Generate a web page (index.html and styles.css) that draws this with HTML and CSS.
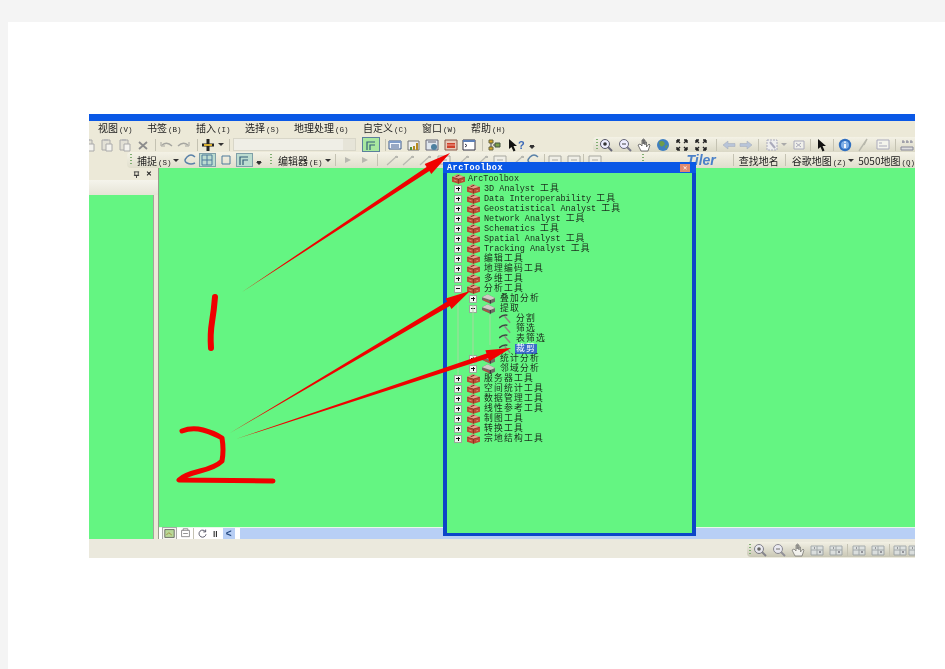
FILE: index.html
```html
<!DOCTYPE html>
<html lang="zh-CN">

<head>
  <meta charset="UTF-8">
  <meta name="viewport" content="width=device-width, initial-scale=1.0">
  <title>ArcToolbox</title>
  <link rel="stylesheet" href="styles.css">
</head>

<body>
  <!-- shared icons -->
  <svg class="defs">
    <symbol id="box" viewBox="0 0 14 10"><path d="M0 3 6 0l8 3v5l-7 2-7-2z" fill="#bc4a32"/><path d="M0 3l7 2 7-2-8-3z" fill="#e8a088"/><path d="M7 5v5M0 3l7 2 7-2" stroke="#7c2c1c" fill="none" stroke-width=".8"/><path d="M4 2.400 8 1" stroke="#5c2015" stroke-width="1"/><path d="M2 6l3 1M10 7l2-.6" stroke="#e8a088" stroke-width=".8"/></symbol>
    <symbol id="set" viewBox="0 0 14 10"><path d="M0 3l6-3 8 4v4l-5 2-9-4z" fill="#6f6b64"/><path d="M0 3l9 3 5-2-8-4z" fill="#cfcbc4"/><path d="M9 6v4" stroke="#333"/><path d="M2 6l6 2.500" stroke="#b5503a" stroke-width="1.400"/></symbol>
    <symbol id="ham" viewBox="0 0 14 10"><path d="M0 4Q4 0 9 1" stroke="#444" stroke-width="1.600" fill="none"/><path d="M6 2l6 7" stroke="#8a8a80" stroke-width="1.500"/></symbol>
    <symbol id="pin" viewBox="0 0 8 8"><path d="M1 1h6M2 1v4h4V1M1 5h6M4 5v3" stroke="#333" fill="none"/></symbol>
    <symbol id="paste" viewBox="0 0 14 14"><path d="M2 2h8v10H2z" fill="#e3e1d6" stroke="#aaa"/><path d="M4 1h4v2H4z" fill="#bbb"/><path d="M6 6h6v7H6z" fill="#f4f3ee" stroke="#aaa"/></symbol>
    <symbol id="del" viewBox="0 0 14 14"><path d="M3 4l8 7M11 4l-8 7" stroke="#8d8d8d" stroke-width="1.800"/></symbol>
    <symbol id="undo" viewBox="0 0 14 14"><path d="M2 7Q7 3 12 8" stroke="#a5a5a0" stroke-width="1.400" fill="none"/><path d="M1 4v4h4" stroke="#a5a5a0" fill="none"/></symbol>
    <symbol id="redo" viewBox="0 0 14 14"><path d="M2 8Q7 3 12 7" stroke="#a5a5a0" stroke-width="1.400" fill="none"/><path d="M13 4v4H9" stroke="#a5a5a0" fill="none"/></symbol>
    <symbol id="plus" viewBox="0 0 14 14"><path d="M5.500 1h3v4.500H13v3H8.500V13h-3V8.500H1v-3h4.500z" fill="#222"/><path d="M3 6h8v2H3z" fill="#d8b030"/></symbol>
    <symbol id="table" viewBox="0 0 14 14"><path d="M1 3h12v8H1z" fill="#f2f6fb" stroke="#3c5a8c"/><path d="M1 3h12v2H1z" fill="#7f9cc8"/><path d="M3 7h8M3 9h8" stroke="#3c5a8c"/></symbol>
    <symbol id="chart" viewBox="0 0 14 14"><path d="M1 3h11v9H1z" fill="#eee" stroke="#777"/><path d="M6 12V8h2v4zM9 12V5h2v7z" fill="#b58a20"/><path d="M3 12v-3h2v3z" fill="#4f8f3a"/></symbol>
    <symbol id="layout" viewBox="0 0 14 14"><path d="M1 2h12v10H1z" fill="#dfe6ee" stroke="#667"/><circle cx="9" cy="9" r="3" fill="#4d7f9f"/><path d="M3 4h8" stroke="#667"/></symbol>
    <symbol id="tbox" viewBox="0 0 14 14"><path d="M1 2h12v10H1z" fill="#e8c8b8" stroke="#8a5a4a"/><path d="M3 5h8v5H3z" fill="#d0402a"/><path d="M3 7h8" stroke="#f0a090"/></symbol>
    <symbol id="term" viewBox="0 0 14 14"><path d="M1 2h12v10H1z" fill="#fff" stroke="#334"/><path d="M1 2h12v2H1z" fill="#5b7fb8"/><path d="M3 6l2 1.500L3 9" stroke="#334" fill="none"/></symbol>
    <symbol id="graph" viewBox="0 0 14 14"><path d="M2 2h4v3H2zM2 9h4v3H2z" fill="#d8a820" stroke="#664"/><path d="M8 5h5v4H8z" fill="#7fa04a" stroke="#454"/><path d="M4 5v4M6 7h2" stroke="#444"/></symbol>
    <symbol id="zin" viewBox="0 0 14 14"><circle cx="6" cy="6" r="4.500" fill="#eef" stroke="#556"/><circle cx="6" cy="6" r="1.800" fill="#333"/><path d="M9 9l4 4" stroke="#667" stroke-width="2"/></symbol>
    <symbol id="zout" viewBox="0 0 14 14"><circle cx="6" cy="6" r="4.500" fill="#eef" stroke="#667"/><path d="M4 6h4" stroke="#444"/><path d="M9 9l4 4" stroke="#778" stroke-width="2"/></symbol>
    <symbol id="hand" viewBox="0 0 14 14"><path d="M4 13 1 7l2-1 2 2V2h1v4-5h1v5-4h1v5-3h1.500v5L12 6l1 1-2 6z" fill="#fff" stroke="#555" stroke-width=".8"/></symbol>
    <symbol id="globe" viewBox="0 0 14 14"><circle cx="7" cy="7" r="6" fill="#3f7fc0"/><path d="M3 4q3-2 5 0t-1 4-4-4zM9 8l3-1-2 4z" fill="#6d9c4a"/></symbol>
    <symbol id="fixin" viewBox="0 0 14 14"><path d="M2 2l3 3M2 2h3M2 2v3M12 2 9 5M12 2H9M12 2v3M2 12l3-3M2 12h3M2 12V9M12 12 9 9M12 12H9M12 12V9" stroke="#222" stroke-width="1.400" fill="none"/></symbol>
    <symbol id="back" viewBox="0 0 14 14"><path d="M1 7l5-4v2.500h7v3H6V11z" fill="#b8c4d8" stroke="#a0a8b8" stroke-width=".5"/></symbol>
    <symbol id="fwd" viewBox="0 0 14 14"><path d="M13 7 8 3v2.500H1v3h7V11z" fill="#b8c4d8" stroke="#a0a8b8" stroke-width=".5"/></symbol>
    <symbol id="sel" viewBox="0 0 14 14"><path d="M2 2h10v10H2z" fill="#eee" stroke="#aab" stroke-dasharray="2 1"/><path d="M5 4l5 6" stroke="#aab" stroke-width="2"/></symbol>
    <symbol id="clr" viewBox="0 0 14 14"><path d="M2 3h10v8H2z" fill="#f0f0ea" stroke="#aab"/><path d="M4 5l5 4M9 5 4 9" stroke="#aab"/></symbol>
    <symbol id="ptr" viewBox="0 0 14 14"><path d="M3 1l8 7H7.500l2 4.500-2 1L5.500 9 3 11z" fill="#111"/></symbol>
    <symbol id="info" viewBox="0 0 14 14"><circle cx="7" cy="7" r="6.200" fill="#2f6fc0"/><circle cx="7" cy="7" r="4" fill="#7fb0e8"/><path d="M7 6v4M7 3.500v1.300" stroke="#fff" stroke-width="1.800"/></symbol>
    <symbol id="bolt" viewBox="0 0 14 14"><path d="M11 1 3 13M11 1 8 7" stroke="#b8b8ac" stroke-width="1.400" fill="none"/></symbol>
    <symbol id="card" viewBox="0 0 14 14"><path d="M1 2h12v9H1z" fill="#f4f4ec" stroke="#aab"/><path d="M3 5h3M3 8h8" stroke="#aab"/></symbol>
    <symbol id="meas" viewBox="0 0 14 14"><path d="M1 9h12v3H1z" fill="#ddd" stroke="#889"/><path d="M3 2v3M7 2v3M11 2v3M2 4h3M6 4h3M10 4h3" stroke="#889"/></symbol>
    <symbol id="circ" viewBox="0 0 14 14"><path d="M11 4Q7 0 3 4t0 6 8 0" fill="none" stroke="#5a82a8" stroke-width="1.500"/></symbol>
    <symbol id="grid" viewBox="0 0 14 14"><path d="M2 2h10v10H2zM7 2v10M2 7h10" fill="none" stroke="#4f7a9a"/></symbol>
    <symbol id="sq" viewBox="0 0 14 14"><path d="M3 3h8v8H3z" fill="none" stroke="#4f7a9a"/></symbol>
    <symbol id="corner" viewBox="0 0 14 14"><path d="M3 12V4h8M6 12V7h5" fill="none" stroke="#345f78" stroke-width="1.200"/></symbol>
    <symbol id="tri" viewBox="0 0 14 14"><path d="M4 4l6 3-6 3z" fill="#b8b8b0"/></symbol>
    <symbol id="edge" viewBox="0 0 14 14"><path d="M2 12 12 3" stroke="#b8b8b0" stroke-width="1.200"/><path d="M10 3h3v2h-3z" fill="#b8b8b0"/></symbol>
    <symbol id="rect" viewBox="0 0 14 14"><path d="M1 3h12v8H1z" fill="#efeee6" stroke="#a8a8a0"/><path d="M4 7h6" stroke="#a8a8a0"/></symbol>
    <symbol id="map" viewBox="0 0 14 14"><path d="M1 2h12v10H1z" fill="#b8d898" stroke="#555"/><path d="M3 9l3-3 4 3" stroke="#a08030" fill="none"/></symbol>
    <symbol id="lay" viewBox="0 0 14 14"><path d="M2 3h10v8H2z" fill="#fff" stroke="#777"/><path d="M4 3V1h6v2M4 7h6" stroke="#777" fill="none"/></symbol>
    <symbol id="ref" viewBox="0 0 14 14"><path d="M11 5A4.500 4.500 0 1 0 11.500 8M11 2v3H8" fill="none" stroke="#556" stroke-width="1.200"/></symbol>
    <symbol id="stat" viewBox="0 0 14 14"><path d="M1 3h12v9H1z" fill="#dde3e8" stroke="#8a949c"/><path d="M1 7h12M7 3v9" stroke="#8a949c"/><path d="M4 5h1M9 9h2" stroke="#556" stroke-width="1.500"/></symbol>
  </svg>

  <div class="sheet">
    <div class="shot">
      <div class="titlebar"></div>

      <div class="menubar">
        <span>视图<b>(V)</b></span>
        <span>书签<b>(B)</b></span>
        <span>插入<b>(I)</b></span>
        <span>选择<b>(S)</b></span>
        <span>地理处理<b>(G)</b></span>
        <span>自定义<b>(C)</b></span>
        <span>窗口<b>(W)</b></span>
        <span>帮助<b>(H)</b></span>
      </div>

      <div class="tb tb-std">
        <div class="grp gap4 back7">
          <svg class="ic"><use href="#paste"/></svg>
          <svg class="ic"><use href="#paste"/></svg>
          <svg class="ic"><use href="#paste"/></svg>
          <svg class="ic"><use href="#del"/></svg>
        </div>
        <i class="sep m5"></i>
        <div class="grp gap2 m4">
          <svg class="ic"><use href="#undo"/></svg>
          <svg class="ic"><use href="#redo"/></svg>
        </div>
        <i class="sep m7"></i>
        <svg class="ic m3"><use href="#plus"/></svg>
        <i class="caret m3"></i>
        <i class="sep m5"></i>
        <div class="combo m3"><i class="combo-btn"></i></div>
        <div class="hi hi-wide m6"><svg class="ic"><use href="#corner"/></svg></div>
        <i class="sep m5"></i>
        <div class="grp gap-data m2">
          <svg class="ic"><use href="#table"/></svg>
          <svg class="ic"><use href="#chart"/></svg>
          <svg class="ic"><use href="#layout"/></svg>
          <svg class="ic"><use href="#tbox"/></svg>
          <svg class="ic"><use href="#term"/></svg>
        </div>
        <i class="sep m6"></i>
        <svg class="ic m4"><use href="#graph"/></svg>
        <svg class="ic m5"><use href="#ptr"/></svg>
        <span class="help">?</span>
        <i class="caret bar m4"></i>

        <div class="grp tools">
          <i class="grip"></i>
          <div class="grp gap5 m1">
            <svg class="ic"><use href="#zin"/></svg>
            <svg class="ic"><use href="#zout"/></svg>
            <svg class="ic"><use href="#hand"/></svg>
            <svg class="ic"><use href="#globe"/></svg>
            <svg class="ic"><use href="#fixin"/></svg>
            <svg class="ic"><use href="#fixin"/></svg>
          </div>
          <i class="sep m8"></i>
          <div class="grp gap3 m5">
            <svg class="ic"><use href="#back"/></svg>
            <svg class="ic"><use href="#fwd"/></svg>
          </div>
          <i class="sep m5"></i>
          <svg class="ic m6"><use href="#sel"/></svg>
          <i class="caret faint m2"></i>
          <svg class="ic m5"><use href="#clr"/></svg>
          <i class="sep m4"></i>
          <svg class="ic m4"><use href="#ptr"/></svg>
          <i class="sep m4"></i>
          <svg class="ic m4"><use href="#info"/></svg>
          <svg class="ic m4"><use href="#bolt"/></svg>
          <svg class="ic m6"><use href="#card"/></svg>
          <i class="sep m5"></i>
          <svg class="ic m4"><use href="#meas"/></svg>
        </div>
      </div>

      <div class="tb tb-snap">
        <div class="grp snap">
          <i class="grip"></i>
          <span class="label m5">捕捉<b>(S)</b></span>
          <i class="caret m1"></i>
          <svg class="ic m5"><use href="#circ"/></svg>
          <div class="hi m1"><svg class="ic"><use href="#grid"/></svg></div>
          <svg class="ic m3"><use href="#sq"/></svg>
          <div class="hi m3"><svg class="ic"><use href="#corner"/></svg></div>
          <i class="caret bar m3"></i>
          <i class="grip m8"></i>
          <span class="label m6">编辑器<b>(E)</b></span>
          <i class="caret m3"></i>
          <i class="sep m4"></i>
          <svg class="ic m5"><use href="#tri"/></svg>
          <svg class="ic m3"><use href="#tri"/></svg>
          <i class="sep m5"></i>
          <svg class="ic m7"><use href="#edge"/></svg>
          <svg class="ic m2"><use href="#edge"/></svg>
          <svg class="ic m3"><use href="#edge"/></svg>
          <svg class="ic m5"><use href="#rect"/></svg>
          <svg class="ic m5"><use href="#edge"/></svg>
          <svg class="ic m5"><use href="#edge"/></svg>
          <svg class="ic m4"><use href="#rect"/></svg>
          <svg class="ic m4"><use href="#edge"/></svg>
          <svg class="ic m2"><use href="#circ"/></svg>
          <i class="sep m3"></i>
          <svg class="ic m3"><use href="#rect"/></svg>
          <svg class="ic m5"><use href="#rect"/></svg>
          <i class="sep m2"></i>
          <svg class="ic m4"><use href="#rect"/></svg>
          <i class="grip m40"></i>
          <span class="tiler">Tiler</span>
          <i class="sep m17"></i>
          <span class="label m5">查找地名</span>
          <i class="sep m6"></i>
          <span class="label m6">谷歌地图<b>(Z)</b></span>
          <i class="caret m2"></i>
          <span class="label m4">5050地图<b>(Q)</b></span>
        </div>
      </div>

      <div class="main">
        <div class="dock">
          <div class="dock-top"><svg class="dock-pin"><use href="#pin"/></svg><span class="dock-btn">✕</span></div>
          <div class="dock-head"></div>
          <div class="dock-body"></div>
        </div>
        <div class="view">
          <div class="map"></div>
          <div class="viewbar">
            <div class="viewtabs">
              <span class="tab-on"><svg class="ic-s"><use href="#map"/></svg></span>
              <svg class="ic-s m3"><use href="#lay"/></svg>
              <i class="sep m2"></i>
              <svg class="ic-s m3"><use href="#ref"/></svg>
              <span class="pause">II</span>
              <span class="collapse">&lt;</span>
            </div>
            <div class="hscroll"></div>
          </div>
        </div>
      </div>

      <div class="status">
        <div class="grp nav">
          <i class="grip"></i>
          <div class="grp gap5 m2">
            <svg class="ic"><use href="#zin"/></svg>
            <svg class="ic"><use href="#zout"/></svg>
            <svg class="ic"><use href="#hand"/></svg>
            <svg class="ic"><use href="#stat"/></svg>
            <svg class="ic"><use href="#stat"/></svg>
          </div>
          <i class="sep m4"></i>
          <svg class="ic m4"><use href="#stat"/></svg>
          <svg class="ic m5"><use href="#stat"/></svg>
          <i class="sep m4"></i>
          <svg class="ic m3"><use href="#stat"/></svg>
          <svg class="ic m1"><use href="#stat"/></svg>
        </div>
      </div>

      <!-- ArcToolbox window -->
      <div class="toolbox">
        <div class="tbx-title">ArcToolbox<span class="tbx-close">✕</span></div>
        <div class="tree">
          <div class="row root"><svg class="ico"><use href="#box"/></svg><span class="en">ArcToolbox</span></div>
          <div class="row"><i class="exp plus"></i><svg class="ico"><use href="#box"/></svg><span><span class="en">3D Analyst </span>工具</span></div>
          <div class="row"><i class="exp plus"></i><svg class="ico"><use href="#box"/></svg><span><span class="en">Data Interoperability </span>工具</span></div>
          <div class="row"><i class="exp plus"></i><svg class="ico"><use href="#box"/></svg><span><span class="en">Geostatistical Analyst </span>工具</span></div>
          <div class="row"><i class="exp plus"></i><svg class="ico"><use href="#box"/></svg><span><span class="en">Network Analyst </span>工具</span></div>
          <div class="row"><i class="exp plus"></i><svg class="ico"><use href="#box"/></svg><span><span class="en">Schematics </span>工具</span></div>
          <div class="row"><i class="exp plus"></i><svg class="ico"><use href="#box"/></svg><span><span class="en">Spatial Analyst </span>工具</span></div>
          <div class="row"><i class="exp plus"></i><svg class="ico"><use href="#box"/></svg><span><span class="en">Tracking Analyst </span>工具</span></div>
          <div class="row"><i class="exp plus"></i><svg class="ico"><use href="#box"/></svg><span>编辑工具</span></div>
          <div class="row"><i class="exp plus"></i><svg class="ico"><use href="#box"/></svg><span>地理编码工具</span></div>
          <div class="row"><i class="exp plus"></i><svg class="ico"><use href="#box"/></svg><span>多维工具</span></div>
          <div class="row"><i class="exp"></i><svg class="ico"><use href="#box"/></svg><span>分析工具</span></div>
          <div class="row sub"><i class="exp plus"></i><svg class="ico"><use href="#set"/></svg><span>叠加分析</span></div>
          <div class="row sub"><i class="exp"></i><svg class="ico"><use href="#set"/></svg><span>提取</span></div>
          <div class="row leaf"><svg class="ico"><use href="#ham"/></svg><span>分割</span></div>
          <div class="row leaf"><svg class="ico"><use href="#ham"/></svg><span>筛选</span></div>
          <div class="row leaf"><svg class="ico"><use href="#ham"/></svg><span>表筛选</span></div>
          <div class="row leaf"><svg class="ico"><use href="#ham"/></svg><span class="picked">裁剪</span></div>
          <div class="row sub"><i class="exp plus"></i><svg class="ico"><use href="#set"/></svg><span>统计分析</span></div>
          <div class="row sub"><i class="exp plus"></i><svg class="ico"><use href="#set"/></svg><span>邻域分析</span></div>
          <div class="row"><i class="exp plus"></i><svg class="ico"><use href="#box"/></svg><span>服务器工具</span></div>
          <div class="row"><i class="exp plus"></i><svg class="ico"><use href="#box"/></svg><span>空间统计工具</span></div>
          <div class="row"><i class="exp plus"></i><svg class="ico"><use href="#box"/></svg><span>数据管理工具</span></div>
          <div class="row"><i class="exp plus"></i><svg class="ico"><use href="#box"/></svg><span>线性参考工具</span></div>
          <div class="row"><i class="exp plus"></i><svg class="ico"><use href="#box"/></svg><span>制图工具</span></div>
          <div class="row"><i class="exp plus"></i><svg class="ico"><use href="#box"/></svg><span>转换工具</span></div>
          <div class="row"><i class="exp plus"></i><svg class="ico"><use href="#box"/></svg><span>宗地结构工具</span></div>
        </div>
      </div>

      <!-- hand drawn annotations, coordinates are in page pixels -->
      <svg class="ink" viewBox="89 114 826 444">
        <g class="tree-lines">
          <path d="M458 295V375M473 305V365M490 315V345"/>
        </g>
        <g class="pen">
          <path class="one" d="M215 297Q214 310 212 322T211 348"/>
          <path d="M182 431Q192 427 203 430T222 438Q224 450 222 461Q216 467 200 471T179 480L273 481"/>
        </g>
        <polygon class="arrow" points="242,292 426.600,166.900 424.700,164 450,153 431.300,174 429.400,171.100"/>
        <polygon class="arrow" points="230,433 447.200,301.600 445.500,298.500 470,291 451.500,308.900 449.800,305.900"/>
        <polygon class="arrow" points="236,439 486.500,353.500 485.400,350.200 511,348 489.200,361.600 488.100,358.300"/>
      </svg>
    </div>
  </div>
</body>

</html>
```

FILE: styles.css
```css
* {
  box-sizing: border-box;
}

body {
  margin: 0;
  padding: 22px 0 0 8px;
  background: #f4f4f4;
  font-family: "Noto Sans CJK SC", "Liberation Sans", sans-serif;
  font-size: 10px;
  color: #222;
  overflow: hidden;
}

.defs {
  display: none;
}

.sheet {
  height: 647px;
  padding: 92px 0 0 81px;
  background: #fff;
}

.shot {
  position: relative;
  display: flex;
  flex-direction: column;
  width: 826px;
  height: 444px;
  overflow: hidden;
  background: #ece9d8;
  filter: blur(0.45px);
}

.titlebar {
  height: 7px;
  background: #0a58e6;
}

.menubar {
  display: flex;
  align-items: center;
  gap: 14.5px;
  height: 16px;
  padding-left: 9px;
  line-height: 16px;
  white-space: nowrap;
}

.menubar b,
.label b {
  margin-left: 1px;
  font-family: "Liberation Mono", monospace;
  font-size: 7.5px;
  font-weight: normal;
}

.tb {
  display: flex;
  align-items: center;
  flex: none;
  white-space: nowrap;
}

.tb-std {
  height: 15px;
}

.tb-snap {
  height: 16px;
  padding-left: 38px;
}

.grp {
  display: flex;
  align-items: center;
  flex: none;
}

.gap2 { gap: 2px; }
.gap3 { gap: 3px; }
.gap4 { gap: 4px; }
.gap5 { gap: 5px; }
.gap-data { gap: 4.5px; }
.back7 { margin-left: -7px; }

.m1 { margin-left: 1px; }
.m2 { margin-left: 2px; }
.m3 { margin-left: 3px; }
.m4 { margin-left: 4px; }
.m5 { margin-left: 5px; }
.m6 { margin-left: 6px; }
.m7 { margin-left: 7px; }
.m8 { margin-left: 8px; }
.m17 { margin-left: 17px; }
.m40 { margin-left: 40px; }

.ic {
  flex: none;
  width: 14px;
  height: 14px;
}

.ic-s {
  flex: none;
  width: 11px;
  height: 11px;
}

.sep {
  flex: none;
  width: 1px;
  height: 12px;
  background: #c4c2b2;
}

.grip {
  flex: none;
  width: 2px;
  height: 12px;
  background: repeating-linear-gradient(#7fae70 0 1px, transparent 1px 3px);
}

.caret {
  flex: none;
  width: 0;
  height: 0;
  border-top: 3px solid #333;
  border-left: 3px solid transparent;
  border-right: 3px solid transparent;
}

.caret.faint {
  border-top-color: #aaa;
}

.caret.bar {
  margin-top: 6px;
  box-shadow: 0 -2px 0 -1px #333;
}

.combo {
  position: relative;
  width: 123px;
  height: 13px;
  background: #efeee6;
  border: 1px solid #d8d6c8;
}

.combo-btn {
  position: absolute;
  top: 0;
  right: 0;
  width: 12px;
  height: 11px;
  background: #e6e4d8;
}

.hi {
  display: flex;
  align-items: center;
  justify-content: center;
  width: 18px;
  height: 14px;
  background: #bcdcd0;
  border: 1px solid #7f9fa8;
}

.hi-wide {
  height: 15px;
  background: #a8e8a0;
  border-color: #5b7f9c;
}

.help {
  margin-left: -2px;
  font-family: "Liberation Sans", sans-serif;
  font-size: 11px;
  font-weight: bold;
  color: #3a68b8;
}

.tools {
  width: 322px;
  height: 15px;
  margin-left: auto;
  padding-left: 3px;
  background: linear-gradient(#f4f2e6, #dad8c6);
  border-radius: 4px 0 0 4px;
}

.snap {
  width: 788px;
  height: 16px;
  padding-left: 3px;
  background: linear-gradient(#f4f2e6, #e0decc);
  border-radius: 4px 0 0 4px;
}

.label {
  flex: none;
}

.tiler {
  margin-left: 42px;
  font-family: "Liberation Sans", sans-serif;
  font-size: 14px;
  font-weight: bold;
  font-style: italic;
  line-height: 14px;
  color: #4a80c8;
}

.main {
  display: flex;
  flex: none;
  height: 371px;
}

.dock {
  display: flex;
  flex-direction: column;
  flex: none;
  width: 70px;
  border-right: 1px solid #9a9a8c;
}

.dock-top {
  display: flex;
  justify-content: flex-end;
  align-items: center;
  gap: 6px;
  height: 12px;
  padding-right: 6px;
}

.dock-pin {
  width: 7px;
  height: 7px;
}

.dock-btn {
  font-family: "Liberation Sans", sans-serif;
  font-size: 7px;
  font-weight: bold;
  line-height: 10px;
}

.dock-head {
  height: 15px;
  background: linear-gradient(#f5f4ec, #e6e4d6);
}

.dock-body {
  flex: 1;
  width: 65px;
  background: #64f582;
  border-right: 1px solid #a4a498;
}

.view {
  display: flex;
  flex-direction: column;
  flex: 1;
}

.map {
  flex: 1;
  background: #64f582;
  border-bottom: 1px solid #e8f8e8;
}

.viewbar {
  display: flex;
  flex: none;
  height: 11px;
  background: #fff;
}

.viewtabs {
  display: flex;
  align-items: center;
  flex: none;
  width: 81px;
  padding-left: 3px;
}

.tab-on {
  display: flex;
  padding: 0 1px;
  border: 1px solid #aaa;
  background: #f4f4ee;
}

.pause {
  margin-left: 5px;
  font-size: 7px;
  font-weight: bold;
}

.collapse {
  width: 12px;
  margin-left: 5px;
  font-family: "Liberation Sans", sans-serif;
  font-size: 10px;
  font-weight: bold;
  line-height: 11px;
  text-align: center;
  color: #264a80;
  background: #b8cff5;
}

.hscroll {
  flex: 1;
  background: #b8cff5;
}

.status {
  display: flex;
  flex: 1;
  justify-content: flex-end;
  padding-top: 3px;
  background: #ebe9dd;
}

.nav {
  width: 168px;
  height: 15px;
  padding-left: 2px;
  background: linear-gradient(#f2f0e4, #c9c7b5);
  border-radius: 4px 0 0 4px;
}

.nav .ic {
  opacity: 0.7;
}

.toolbox {
  position: absolute;
  left: 354px;
  top: 48px;
  width: 253px;
  height: 374px;
  background: #64f582;
  border: solid #0c46c8;
  border-width: 0 4px 3px;
}

.tbx-title {
  display: flex;
  align-items: center;
  justify-content: space-between;
  height: 11px;
  margin: 0 -4px;
  padding: 0 6px 0 4px;
  font-family: "Liberation Mono", monospace;
  font-size: 8.5px;
  font-weight: bold;
  letter-spacing: 0.5px;
  color: #fff;
  background: #0a58e6;
}

.tbx-close {
  width: 10px;
  height: 8px;
  font-size: 7px;
  line-height: 8px;
  letter-spacing: 0;
  text-align: center;
  background: #e08a70;
}

.tree {
  padding-top: 1px;
}

.row {
  display: flex;
  align-items: center;
  height: 10px;
  padding-left: 7px;
  font-family: "Liberation Mono", "Noto Sans CJK SC", monospace;
  font-size: 8.800px;
  letter-spacing: 1.200px;
  line-height: 10px;
  white-space: pre;
  color: #1a2a1a;
}

.row.root {
  padding-left: 5px;
}

.row.sub {
  padding-left: 22px;
}

.row.leaf {
  padding-left: 52px;
}

.row .en {
  font-size: 8.500px;
  letter-spacing: 0;
}

.exp {
  position: relative;
  flex: none;
  width: 8px;
  height: 8px;
  margin-right: 5px;
  background: #eef4ee;
  border: 1px solid #9aa89a;
}

.exp::before {
  content: "";
  position: absolute;
  left: 1px;
  top: 2px;
  width: 4px;
  height: 1px;
  background: #111;
}

.exp.plus::after {
  content: "";
  position: absolute;
  left: 2.500px;
  top: 1px;
  width: 1px;
  height: 4px;
  background: #111;
}

.ico {
  flex: none;
  width: 13px;
  height: 10px;
  margin-right: 4px;
}

.root .ico {
  margin-right: 3px;
}

.sub .ico {
  margin-right: 5px;
}

.picked {
  margin-left: -1px;
  padding: 0 1px;
  color: #fff;
  background: #3a6cc8;
}

.ink {
  position: absolute;
  left: 0;
  top: 0;
  width: 826px;
  height: 444px;
  pointer-events: none;
}

.tree-lines path {
  fill: none;
  stroke: #a8d8a0;
  stroke-width: 1;
}

.pen path {
  fill: none;
  stroke: #f00000;
  stroke-width: 5;
  stroke-linecap: round;
  stroke-linejoin: round;
}

.pen .one {
  stroke-width: 6;
}

.arrow {
  fill: #f00000;
}
```
